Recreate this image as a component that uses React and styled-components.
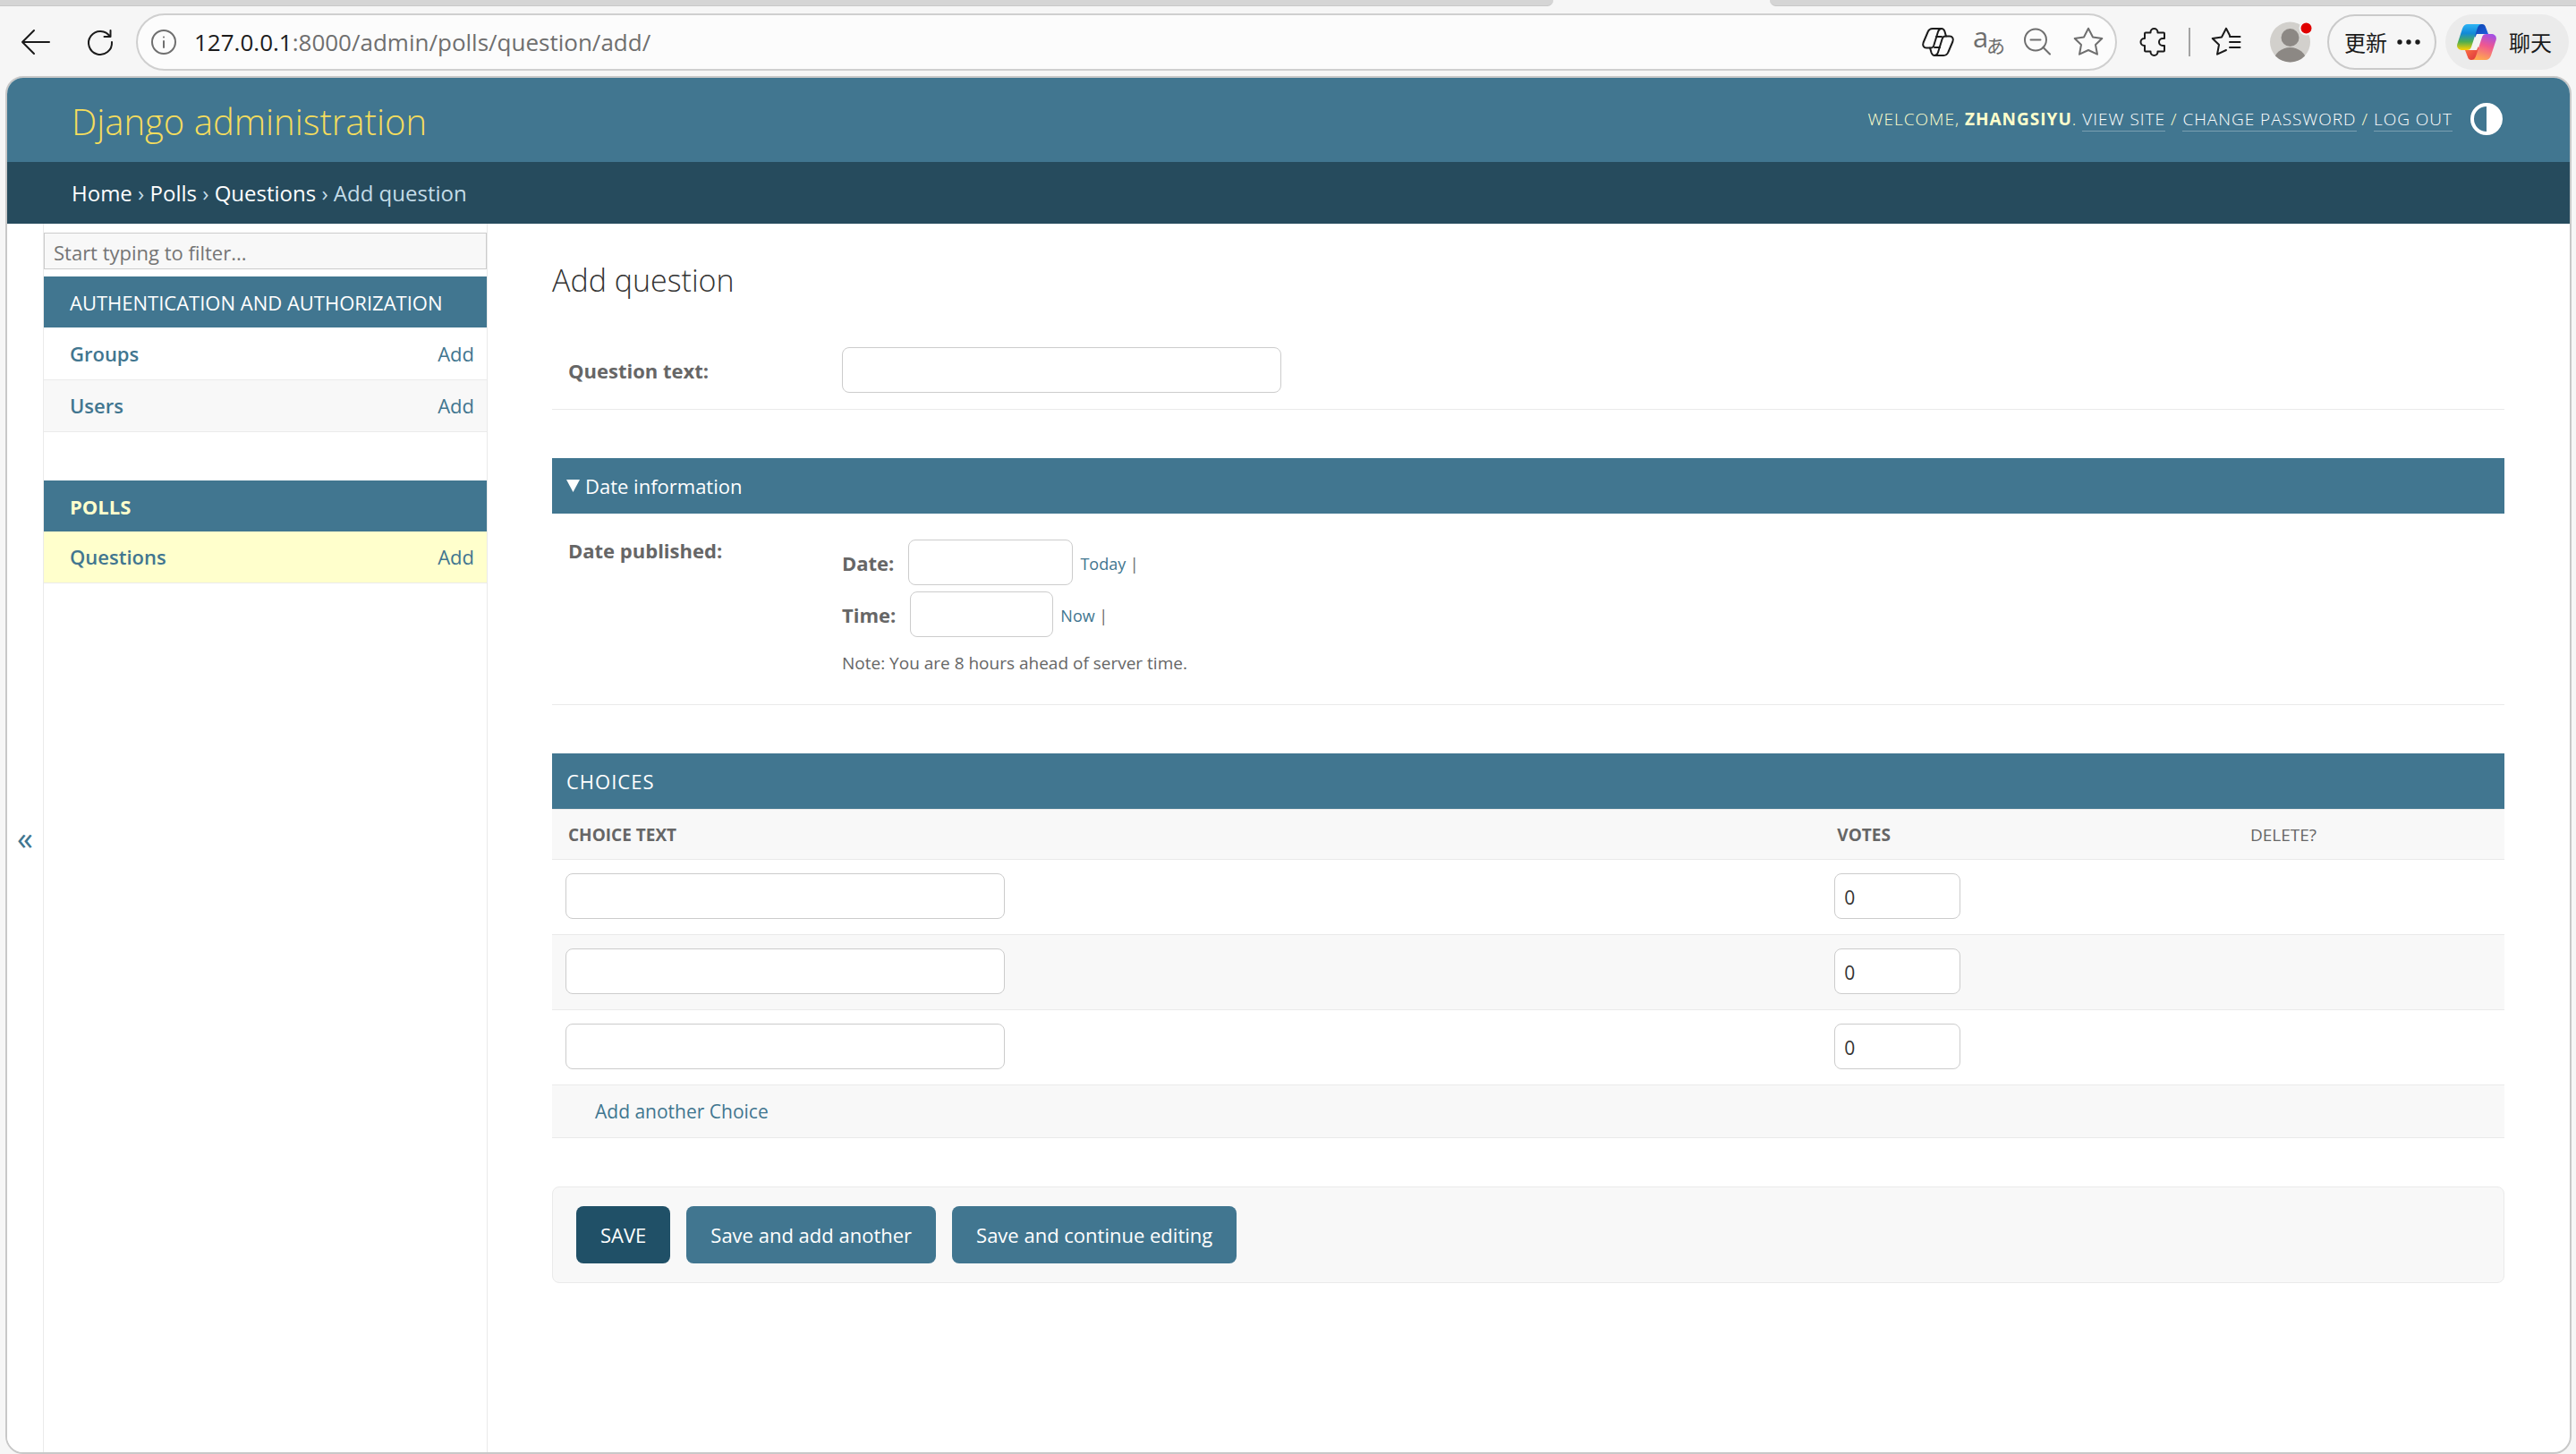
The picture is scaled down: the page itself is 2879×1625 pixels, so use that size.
import React from 'react';
import styled, { createGlobalStyle } from 'styled-components';

const GlobalStyle = createGlobalStyle`
    *, *::before, *::after {
        box-sizing: border-box;
    }

    body {
        margin: 0;
        background: #f6f6f6;
        color: #333;
        font-family: "Open Sans", "Noto Sans", "Noto Sans CJK SC", sans-serif;
        font-size: 22px;
        line-height: 30px;
    }

    button, input {
        font-family: inherit;
        font-size: inherit;
        line-height: inherit;
    }

    a {
        color: #417690;
        text-decoration: none;
    }
`;

/* ---------- browser bar ---------- */

const Page = styled.div`
    display: flex;
    flex-direction: column;
    min-height: 100vh;
`;

const TabStrip = styled.div`
    display: flex;
    justify-content: space-between;
    height: 7px;
`;

const TabGroup = styled.div`
    width: ${props => props.$width};
    background: #d5d5d5;
    border-bottom: 1px solid #c8c8c8;
    border-radius: ${props => props.$end ? '0 0 0 14px' : '0 0 14px 0'};
`;

const Toolbar = styled.div`
    display: flex;
    align-items: center;
    height: 78px;
    padding: 2px 8px 0 24px;
`;

const IconButton = styled.button`
    display: flex;
    flex: none;
    padding: 0;
    border: 0;
    background: none;
    margin-right: ${props => props.$gap || 0}px;
    color: ${props => props.$muted ? '#6f6f6f' : '#1b1b1b'};

    svg {
        display: block;
        overflow: visible;
        fill: none;
        stroke: currentColor;
        stroke-width: 2;
        stroke-linecap: round;
        stroke-linejoin: round;
    }
`;

const AddressBar = styled.div`
    display: flex;
    flex: 1;
    align-items: center;
    height: 64px;
    padding: 0 14px 0 15px;
    border: 2px solid #cfcfcf;
    border-radius: 32px;
    background: #fcfcfc;
    margin-right: 26px;
`;

const Url = styled.div`
    flex: 1;
    color: #6f6f6f;
    font-size: 26px;

    span {
        color: #1b1b1b;
    }
`;

const Divider = styled.div`
    width: 2px;
    height: 32px;
    margin-right: 24px;
    background: #a3a3a3;
`;

const Pill = styled.button`
    display: flex;
    flex: none;
    align-items: center;
    height: 62px;
    width: ${props => props.$width}px;
    padding: 0 0 0 ${props => props.$pad}px;
    gap: ${props => props.$gap}px;
    border: ${props => props.$filled ? '0' : '2px solid #cacaca'};
    border-radius: 31px;
    background: ${props => props.$filled ? '#ebebeb' : 'transparent'};
    color: #1b1b1b;
    font-family: "Noto Sans CJK SC", sans-serif;
    font-size: 24px;
    margin-right: ${props => props.$end ? 0 : 10}px;

    svg {
        display: block;
    }
`;

/* ---------- admin page ---------- */

const Frame = styled.div`
    display: flex;
    flex: 1;
    flex-direction: column;
    margin: 0 5px 0 6px;
    border: 2px solid #c8c8c8;
    border-radius: 20px;
    background: #fff;
    overflow: hidden;
`;

const Header = styled.header`
    display: flex;
    align-items: center;
    justify-content: space-between;
    height: 94px;
    padding: 0 75px 0 72px;
    background: #417690;
`;

const Brand = styled.a`
    color: #f5dd5d;
    font-size: 40px;
    font-weight: 300;
    line-height: 54px;
    padding-top: 4px;
`;

const UserTools = styled.div`
    display: flex;
    align-items: center;
    gap: 20px;
    padding-bottom: 2px;
    color: #ffc;
    font-size: 19px;
    font-weight: 300;
    line-height: 24px;
    letter-spacing: 1px;

    strong {
        font-weight: 700;
    }

    a {
        color: #fff;
        border-bottom: 1px solid #7a9fb1;
    }
`;

const ThemeButton = styled.button`
    display: flex;
    padding: 0;
    border: 0;
    background: none;
`;

const Breadcrumbs = styled.nav`
    height: 69px;
    padding: 20px 72px;
    background: #264b5d;
    color: #c4dce8;
    font-size: 24px;

    a {
        color: #fff;
    }
`;

const Main = styled.div`
    display: flex;
    flex: 1;
`;

const NavToggle = styled.button`
    width: 40px;
    padding: 0 0 0 11px;
    border: 0;
    background: #fff;
    color: #417690;
    font-size: 36px;
    text-align: left;
`;

const Sidebar = styled.nav`
    flex: none;
    width: 497px;
    padding-top: 10px;
    border: solid #eaeaea;
    border-width: 0 1px;
`;

const Filter = styled.input`
    display: block;
    width: 100%;
    height: 41px;
    margin-bottom: 8px;
    padding: 2px 10px 0;
    border: 1px solid #ccc;
    border-radius: 0;
    background: #f8f8f8;
    outline: 0;

    &::placeholder {
        color: #757575;
        opacity: 1;
    }
`;

const NavTable = styled.table`
    width: 100%;
    margin-bottom: 54px;
    border-collapse: collapse;

    caption {
        height: 57px;
        padding: 14px 29px;
        background: #417690;
        text-align: left;
        text-transform: uppercase;
    }

    caption a {
        color: ${props => props.$current ? '#ffc' : '#fff'};
        font-weight: ${props => props.$current ? 700 : 400};
    }

    th, td {
        height: 58px;
        padding: 0 14px 0 29px;
        border-bottom: 1px solid #eaeaea;
        text-align: left;
        font-weight: 600;
    }

    td {
        text-align: right;
        font-weight: 400;
    }

    tr {
        background: ${props => props.$current ? '#ffc' : '#fff'};
    }

    tr:nth-child(even) {
        background: #f8f8f8;
    }
`;

const Content = styled.main`
    flex: 1;
    padding: 36px 73px 72px 72px;
`;

const Title = styled.h1`
    margin: 0 0 31px;
    font-size: 34px;
    font-weight: 300;
    line-height: 54px;
`;

const Fieldset = styled.section`
    margin-bottom: 54px;
`;

const SectionHead = styled.h2`
    display: flex;
    align-items: center;
    gap: 6px;
    height: 62px;
    margin: 0;
    padding: 0 16px;
    background: #417690;
    color: #fff;
    font-size: 22px;
    font-weight: 400;
    letter-spacing: ${props => props.$caps ? '1px' : 'normal'};
    text-transform: ${props => props.$caps ? 'uppercase' : 'none'};
`;

const FormRow = styled.div`
    display: flex;
    align-items: ${props => props.$top ? 'flex-start' : 'center'};
    padding: ${props => props.$top ? '26px 18px 32px' : '17px 18px 18px'};
    border-bottom: 1px solid #eaeaea;
`;

const Label = styled.label`
    color: #666;
    font-weight: 700;
    width: ${props => props.$column ? '306px' : 'auto'};
`;

const TextInput = styled.input`
    display: block;
    width: ${props => props.$width}px;
    height: 51px;
    padding: 2px 10px 0;
    border: 1px solid #ccc;
    border-radius: 8px;
    background: #fff;
    color: #333;
    font-size: 21px;
    outline: 0;
    appearance: textfield;
`;

const DateFields = styled.div`
    display: flex;
    flex-direction: column;
    gap: 7px;
    padding-top: 3px;
    color: #666;
`;

const DateLine = styled.div`
    display: flex;
    align-items: center;
    gap: 16px;
`;

const Shortcut = styled.span`
    margin-left: -8px;
    padding-top: 2px;
    font-size: 18px;
`;

const Note = styled.div`
    margin-top: 8px;
    font-size: 19px;
    line-height: 28px;
`;

const ChoiceTable = styled.table`
    width: 100%;
    border-top: 1px solid #eaeaea;
    border-collapse: collapse;
    table-layout: fixed;

    th {
        height: 56px;
        padding: 0 18px;
        border-bottom: 1px solid #eaeaea;
        background: #f8f8f8;
        color: #666;
        font-size: 19px;
        font-weight: 700;
        line-height: 24px;
        text-align: left;
        text-transform: uppercase;
    }

    th:first-child {
        width: 65%;
    }

    th:last-child {
        font-weight: 500;
        width: 302px;
    }

    td {
        padding: 15px 15px 17px;
        border-bottom: 1px solid #eaeaea;
    }

    tr:nth-child(even) td {
        background: #f8f8f8;
    }

    tr:last-child td {
        padding: 14px 48px;
        font-size: 21px;
    }
`;

const SubmitRow = styled.div`
    display: flex;
    gap: 18px;
    padding: 21px 26px;
    border: 1px solid #eaeaea;
    border-radius: 8px;
    background: #f8f8f8;
`;

const SubmitButton = styled.button`
    height: 64px;
    padding: 0 27px;
    border: 0;
    border-radius: 8px;
    background: ${props => props.$primary ? '#205067' : '#417690'};
    color: #fff;
`;

/* ---------- icons ---------- */

const STAR = '16,.7 21,10.5 31.3,12 24,19 26,29.7 16,25 6,29.7 8,19 .7,12 11,10.5';

function CopilotOutline() {
    const half = 'M27 9.5L25.4 4C24.6 2 24 1 22 1H12C8.500 1 7.400 2.500 6.500 5L1.600 16.500C.3 20 2 22.500 5 22.500H10C12 22.500 12.600 21.500 13.200 20L18 4.500C18.600 2.500 19.500 1 22 1';
    return (
        <svg width="36" height="32" viewBox="0 0 36 32">
            <path d={half} />
            <path d={half} transform="rotate(180 18 16)" />
            <path d="M16 10H22M14 22H20" />
        </svg>
    );
}

function CopilotLogo() {
    const body = 'M12 0H28C24.500 0 23.300 3 22.300 6L16 25.500C15.200 28 13.700 29 11 29H6C1.500 29 -.8 26 .4 22L6 5C7.300 1.500 9 0 12 0Z';
    const flap = 'M22 0H28C30.500 0 31.500 1.500 32.300 4L35 11H26C23 11 21.500 12.500 20.500 15L18 12Z';
    return (
        <svg width="44" height="40" viewBox="0 0 44 40">
            <defs>
                <linearGradient id="cool" x1="0" y1="0" x2="0" y2="1">
                    <stop offset="0" stopColor="#2cb4f4" />
                    <stop offset=".35" stopColor="#1289d8" />
                    <stop offset=".68" stopColor="#4fae4f" />
                    <stop offset="1" stopColor="#ffd000" />
                </linearGradient>
                <linearGradient id="deep" x1="0" y1="0" x2="1" y2="1">
                    <stop offset="0" stopColor="#0b3fa8" />
                    <stop offset="1" stopColor="#2065e6" />
                </linearGradient>
                <linearGradient id="warm" x1=".7" y1="0" x2=".4" y2="1">
                    <stop offset="0" stopColor="#a44fe4" />
                    <stop offset=".45" stopColor="#f0588f" />
                    <stop offset="1" stopColor="#ffa94f" />
                </linearGradient>
                <linearGradient id="ember" x1="0" y1="0" x2="1" y2="1">
                    <stop offset="0" stopColor="#ff7a45" />
                    <stop offset="1" stopColor="#d92c3c" />
                </linearGradient>
            </defs>
            <path d={flap} fill="url(#deep)" />
            <path d="M9 29H18C21 29 22.500 27.500 23.500 25L26 28L22 40H16C13.500 40 12.500 38.500 11.700 36Z" fill="url(#ember)" />
            <path d="M22 11H30L22 29H14Z" fill="#f3f3f3" />
            <path d={body} fill="url(#cool)" />
            <path
                d="M32 40H16C19.500 40 20.700 37 21.700 34L28 14.500C28.800 12 30.300 11 33 11H38C42.500 11 44.800 14 43.600 18L38 35C36.700 38.500 35 40 32 40Z"
                fill="url(#warm)"
            />
        </svg>
    );
}

function BrowserBar() {
    return (
        <>
            <TabStrip>
                <TabGroup $width="1736px" />
                <TabGroup $width="901px" $end />
            </TabStrip>
            <Toolbar>
                <IconButton aria-label="Back" $gap={42}>
                    <svg width="32" height="28" viewBox="0 0 32 28">
                        <path d="M31 14H1M14 1L1 14L14 27" />
                    </svg>
                </IconButton>
                <IconButton aria-label="Refresh" $gap={26}>
                    <svg width="28" height="28" viewBox="0 0 28 28">
                        <path d="M25.500 1V8H18.500M25 8A13 13 0 1 0 27 14" />
                    </svg>
                </IconButton>
                <AddressBar>
                    <IconButton aria-label="Site information" $muted $gap={20}>
                        <svg width="28" height="28" viewBox="0 0 28 28">
                            <circle cx="14" cy="14" r="13" />
                            <path d="M14 13V20M14 8.500V8.600" />
                        </svg>
                    </IconButton>
                    <Url><span>127.0.0.1</span>:8000/admin/polls/question/add/</Url>
                    <IconButton aria-label="Copilot" $gap={22}>
                        <CopilotOutline />
                    </IconButton>
                    <IconButton aria-label="Translate" $muted $gap={22}>
                        <svg width="34" height="32" viewBox="0 0 34 32">
                            <g fill="currentColor" stroke="none">
                                <text x="-1" y="22" fontSize="31" fontFamily="Open Sans" fontWeight="400">a</text>
                                <text x="14" y="28" fontSize="21" fontFamily="Noto Sans CJK JP">あ</text>
                            </g>
                        </svg>
                    </IconButton>
                    <IconButton aria-label="Zoom out" $muted $gap={26}>
                        <svg width="30" height="32" viewBox="0 0 30 32">
                            <circle cx="13" cy="13.500" r="12" />
                            <path d="M7.500 13.500H18.500M21.500 22L29 29.500" />
                        </svg>
                    </IconButton>
                    <IconButton aria-label="Add to favourites" $muted>
                        <svg width="32" height="32" viewBox="0 0 32 32">
                            <polygon points={STAR} />
                        </svg>
                    </IconButton>
                </AddressBar>
                <IconButton aria-label="Extensions" $gap={26}>
                    <svg width="28" height="32" viewBox="0 0 28 32">
                        <path d="M6 5.500H11.500V5A4 4 0 0 1 19.500 5V5.500H26A1 1 0 0 1 27 6.500V12H25A4 4 0 0 0 25 20H27V25.500A1 1 0 0 1 26 26.500H19.500V27A4 4 0 0 1 11.500 27V26.500H6A1 1 0 0 1 5 25.500V20H4.500A4 4 0 0 1 4.500 12H5V6.500A1 1 0 0 1 6 5.500Z" />
                    </svg>
                </IconButton>
                <Divider />
                <IconButton aria-label="Favourites" $gap={33}>
                    <svg width="32" height="32" viewBox="0 0 32 32">
                        <path d="M20 10H31.500M20 16H31.500M20 22H31.500M20 8.500L16 .7L11 10.500L.7 12L8 19L6 29.700L16 25" />
                    </svg>
                </IconButton>
                <IconButton aria-label="Profile" $gap={18}>
                    <svg width="46" height="46" viewBox="0 0 46 46">
                        <clipPath id="face"><circle cx="22.500" cy="23" r="22.500" /></clipPath>
                        <g clipPath="url(#face)" stroke="none">
                            <rect width="46" height="46" fill="#d2d0cc" />
                            <circle cx="22.500" cy="18" r="10" fill="#8c8884" />
                            <ellipse cx="22.500" cy="44" rx="18" ry="15" fill="#8c8884" />
                        </g>
                        <circle cx="40.500" cy="7.500" r="7" fill="#e00000" stroke="#f6f6f6" />
                    </svg>
                </IconButton>
                <Pill $width={122} $pad={17} $gap={11}>
                    更新
                    <svg width="26" height="6" viewBox="0 0 26 6" fill="#1b1b1b">
                        <circle cx="3" cy="3" r="2.700" />
                        <circle cx="13" cy="3" r="2.700" />
                        <circle cx="23" cy="3" r="2.700" />
                    </svg>
                </Pill>
                <Pill $width={138} $pad={13} $gap={14} $filled $end>
                    <CopilotLogo />
                    聊天
                </Pill>
            </Toolbar>
        </>
    );
}

function AppModule({ name, models, current }) {
    return (
        <NavTable $current={current}>
            <caption><a href="#app">{name}</a></caption>
            <tbody>
                {models.map(model => (
                    <tr key={model}>
                        <th scope="row"><a href="#list">{model}</a></th>
                        <td><a href="#add">Add</a></td>
                    </tr>
                ))}
            </tbody>
        </NavTable>
    );
}

function Choices() {
    return (
        <Fieldset>
            <SectionHead $caps>Choices</SectionHead>
            <ChoiceTable>
                <thead>
                    <tr>
                        <th>Choice text</th>
                        <th>Votes</th>
                        <th>Delete?</th>
                    </tr>
                </thead>
                <tbody>
                    {[0, 1, 2].map(row => (
                        <tr key={row}>
                            <td><TextInput type="text" aria-label="Choice text" $width={491} /></td>
                            <td><TextInput type="number" aria-label="Votes" defaultValue="0" $width={141} /></td>
                            <td />
                        </tr>
                    ))}
                    <tr>
                        <td colSpan="3"><a href="#choice">Add another Choice</a></td>
                    </tr>
                </tbody>
            </ChoiceTable>
        </Fieldset>
    );
}

function App() {
    return (
        <Page>
            <GlobalStyle />
            <BrowserBar />
            <Frame>
                <Header>
                    <Brand href="#home">Django administration</Brand>
                    <UserTools>
                        <div>
                            WELCOME, <strong>ZHANGSIYU</strong>. <a href="#site">VIEW SITE</a> / <a href="#password">CHANGE PASSWORD</a> / <a href="#logout">LOG OUT</a>
                        </div>
                        <ThemeButton aria-label="Toggle theme">
                            <svg width="36" height="36" viewBox="0 0 36 36">
                                <circle cx="18" cy="18" r="16" fill="none" stroke="#fff" strokeWidth="4" />
                                <path d="M18 2A16 16 0 0 1 18 34Z" fill="#fff" />
                            </svg>
                        </ThemeButton>
                    </UserTools>
                </Header>
                <Breadcrumbs>
                    <a href="#home">Home</a> › <a href="#polls">Polls</a> › <a href="#questions">Questions</a> › Add question
                </Breadcrumbs>
                <Main>
                    <NavToggle aria-label="Toggle navigation">«</NavToggle>
                    <Sidebar>
                        <Filter type="search" placeholder="Start typing to filter..." aria-label="Filter navigation items" />
                        <AppModule name="Authentication and Authorization" models={['Groups', 'Users']} />
                        <AppModule name="Polls" models={['Questions']} current />
                    </Sidebar>
                    <Content>
                        <Title>Add question</Title>
                        <Fieldset>
                            <FormRow>
                                <Label htmlFor="question" $column>Question text:</Label>
                                <TextInput id="question" type="text" $width={491} />
                            </FormRow>
                        </Fieldset>
                        <Fieldset>
                            <SectionHead>
                                <svg width="15" height="14" viewBox="0 0 15 14" fill="#fff">
                                    <path d="M0 0H15L7.500 14Z" />
                                </svg>
                                Date information
                            </SectionHead>
                            <FormRow $top>
                                <Label htmlFor="date" $column>Date published:</Label>
                                <DateFields>
                                    <DateLine>
                                        <Label htmlFor="date">Date:</Label>
                                        <TextInput id="date" type="text" $width={184} />
                                        <Shortcut><a href="#today">Today</a> |</Shortcut>
                                    </DateLine>
                                    <DateLine>
                                        <Label htmlFor="time">Time:</Label>
                                        <TextInput id="time" type="text" $width={160} />
                                        <Shortcut><a href="#now">Now</a> |</Shortcut>
                                    </DateLine>
                                    <Note>Note: You are 8 hours ahead of server time.</Note>
                                </DateFields>
                            </FormRow>
                        </Fieldset>
                        <Choices />
                        <SubmitRow>
                            <SubmitButton $primary>SAVE</SubmitButton>
                            <SubmitButton>Save and add another</SubmitButton>
                            <SubmitButton>Save and continue editing</SubmitButton>
                        </SubmitRow>
                    </Content>
                </Main>
            </Frame>
        </Page>
    );
}

export default App;
